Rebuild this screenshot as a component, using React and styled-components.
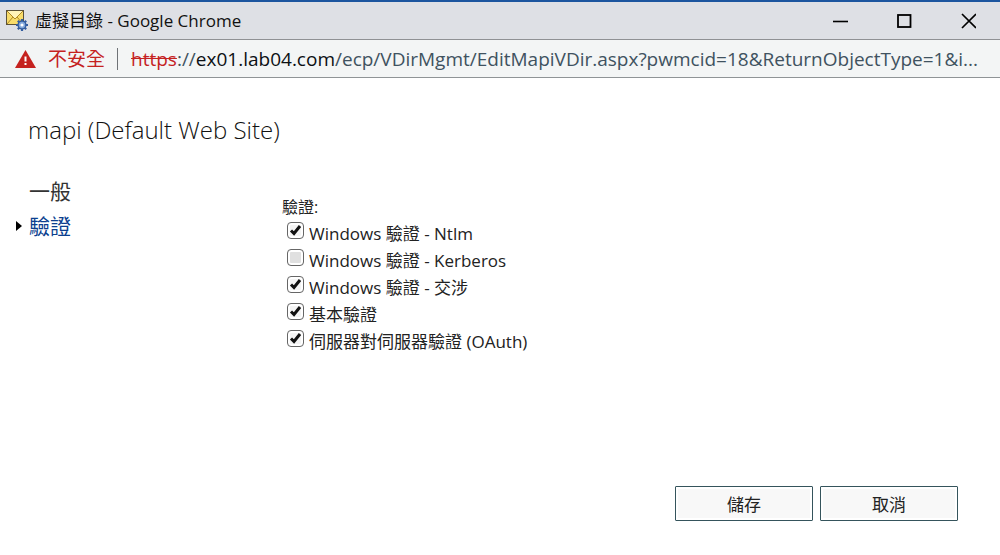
import React from "react";
import styled, { createGlobalStyle } from "styled-components";

const GlobalStyle = createGlobalStyle`
  *, *::before, *::after { box-sizing: border-box; }
  body {
    margin: 0;
    background: #fff;
    font-family: "Open Sans", "Noto Sans CJK TC", sans-serif;
    color: #333;
  }
`;

const Window = styled.div`
  min-height: 100vh;
  display: flex;
  flex-direction: column;
  background: #fff;
`;

const TitleBar = styled.header`
  display: flex;
  align-items: center;
  height: 40px;
  padding-left: 5px;
  background: #dee0e5;
  border-top: 2px solid #1c559f;
  border-bottom: 1px solid #8f9194;
`;

const WindowTitle = styled.h1`
  flex: 1;
  margin: 0 0 0 6px;
  font-size: 17px;
  line-height: 24px;
  font-weight: 400;
  color: #111;
`;

const WindowButton = styled.button`
  display: flex;
  align-items: center;
  justify-content: center;
  width: 64px;
  height: 36px;
  padding: 0;
  border: 0;
  background: transparent;
  color: #000;
`;

const AddressBar = styled.div`
  display: flex;
  align-items: center;
  height: 38px;
  padding: 0 16px 0 15px;
  background: #f3f5f5;
  border-bottom: 1px solid #8f9496;
  font-size: 19px;
  line-height: 26px;
  white-space: nowrap;
`;

const SecurityLabel = styled.span`
  margin-left: 12px;
  padding-right: 12px;
  color: #c5221f;
`;

const Divider = styled.span`
  width: 1px;
  height: 22px;
  margin-right: 13px;
  background: #6f7377;
`;

const Url = styled.span`
  flex: 1;
  min-width: 0;
  overflow: hidden;
  color: #40525f;
`;

const Scheme = styled.s`
  color: #c5221f;
`;

const Host = styled.span`
  color: #0c1014;
`;

const Page = styled.main`
  flex: 1;
  display: flex;
  flex-direction: column;
  padding: 36px 42px 34px 16px;
`;

const PageTitle = styled.h2`
  margin: 0 0 27px 12px;
  font-size: 24px;
  line-height: 32px;
  font-weight: 300;
  color: #111;
`;

const Columns = styled.div`
  flex: 1;
  display: flex;
`;

const Nav = styled.nav`
  width: 266px;
  flex: none;
`;

const NavLink = styled.a`
  display: flex;
  align-items: center;
  height: 35px;
  font-size: 21px;
  line-height: 28px;
  text-decoration: none;
  color: ${({ $active }) => ($active ? "#0b3f8f" : "#333")};
`;

const Marker = styled.span`
  display: flex;
  width: 13px;
  color: #000;
`;

const Options = styled.fieldset`
  margin: 0;
  padding: 22px 0 0;
  border: 0;
`;

const Legend = styled.legend`
  float: left;
  padding: 0;
  font-size: 16px;
  line-height: 24px;
  color: #222;
`;

const OptionList = styled.div`
  clear: both;
  padding: 2px 0 0 5px;
`;

const Option = styled.label`
  display: flex;
  align-items: flex-start;
  height: 27px;
  font-size: 17px;
  line-height: 25px;
  color: #222;
`;

const CheckboxFrame = styled.span`
  display: grid;
  width: 17px;
  height: 17px;
  margin: 1px 5px 0 0;
`;

const Checkbox = styled.input`
  appearance: none;
  grid-area: 1 / 1;
  width: 17px;
  height: 17px;
  margin: 0;
  border: 1px solid #666;
  border-radius: 4px;
  background: #e0e0e0;
  box-shadow: inset 0 0 0 2px #fff;
  &:checked { background: #f4f4f4; }
  & + svg { visibility: hidden; }
  &:checked + svg { visibility: visible; }
`;

const Tick = styled.svg`
  grid-area: 1 / 1;
  pointer-events: none;
`;

const Actions = styled.footer`
  display: flex;
  justify-content: flex-end;
  gap: 7px;
`;

const ActionButton = styled.button`
  width: 138px;
  height: 35px;
  padding: 2px 0 0;
  border: 1px solid #35545c;
  border-radius: 1px;
  background: #f8f8f8;
  box-shadow: inset 0 0 0 2px #fff;
  font-family: inherit;
  font-size: 17px;
  line-height: 24px;
  color: #222;
`;

function MailGearIcon() {
  return (
    <svg width="24" height="24" viewBox="0 0 24 24" aria-hidden="true">
      <rect x="1.5" y="1.5" width="17" height="14" fill="#f8dc6a" stroke="#5b5138" />
      <path d="M2 2h16l-8 8z" fill="#fff3b8" />
      <path d="M2 2l8 8 8-8M2 15l6-7M18 15l-6-7" fill="none" stroke="#b08a25" />
      <path
        d="M17 10v12M11 16h12M12.800 11.800l8.400 8.400M21.200 11.800l-8.400 8.400"
        stroke="#335d9f"
        strokeWidth="2.200"
      />
      <circle cx="17" cy="16" r="4.600" fill="#335d9f" />
      <circle cx="17" cy="16" r="3.200" fill="#83a8dc" />
      <circle cx="17" cy="16" r="1.600" fill="#fff" />
    </svg>
  );
}

function WarningIcon() {
  return (
    <svg width="21" height="18" viewBox="0 0 21 18" aria-hidden="true">
      <path d="M10.500 0L21 18H0z" fill="#c5221f" />
      <path d="M9.500 6.500h2v5h-2zM9.500 13h2v2h-2z" fill="#fff" />
    </svg>
  );
}

const navItems = [
  { label: "一般", active: false },
  { label: "驗證", active: true },
];

const options = [
  { id: "ntlm", label: "Windows 驗證 - Ntlm", checked: true },
  { id: "kerberos", label: "Windows 驗證 - Kerberos", checked: false },
  { id: "negotiate", label: "Windows 驗證 - 交涉", checked: true },
  { id: "basic", label: "基本驗證", checked: true },
  { id: "oauth", label: "伺服器對伺服器驗證 (OAuth)", checked: true },
];

export default function App() {
  return (
    <Window>
      <GlobalStyle />
      <TitleBar>
        <MailGearIcon />
        <WindowTitle>虛擬目錄 - Google Chrome</WindowTitle>
        <WindowButton type="button" aria-label="最小化">
          <svg width="16" height="16" viewBox="0 0 16 16">
            <path d="M1 8.500h15" stroke="currentColor" strokeWidth="1.600" />
          </svg>
        </WindowButton>
        <WindowButton type="button" aria-label="最大化">
          <svg width="16" height="16" viewBox="0 0 16 16">
            <rect x="2" y="2" width="12.500" height="12" fill="none" stroke="currentColor" strokeWidth="1.800" />
          </svg>
        </WindowButton>
        <WindowButton type="button" aria-label="關閉">
          <svg width="16" height="16" viewBox="0 0 16 16">
            <path d="M2 1l14 14M16 1L2 15" stroke="currentColor" strokeWidth="1.700" />
          </svg>
        </WindowButton>
      </TitleBar>
      <AddressBar>
        <WarningIcon />
        <SecurityLabel>不安全</SecurityLabel>
        <Divider />
        <Url>
          <Scheme>https</Scheme>://<Host>ex01.lab04.com</Host>
          /ecp/VDirMgmt/EditMapiVDir.aspx?pwmcid=18&amp;ReturnObjectType=1&amp;i...
        </Url>
      </AddressBar>
      <Page>
        <PageTitle>mapi (Default Web Site)</PageTitle>
        <Columns>
          <Nav>
            {navItems.map((item) => (
              <NavLink key={item.label} href="#" $active={item.active}>
                <Marker>
                  {item.active && (
                    <svg width="6" height="12" viewBox="0 0 6 12" aria-hidden="true">
                      <path d="M0 1l6 5-6 5z" fill="currentColor" />
                    </svg>
                  )}
                </Marker>
                {item.label}
              </NavLink>
            ))}
          </Nav>
          <Options>
            <Legend>驗證:</Legend>
            <OptionList>
              {options.map((option) => (
                <Option key={option.id} htmlFor={option.id}>
                  <CheckboxFrame>
                    <Checkbox id={option.id} type="checkbox" defaultChecked={option.checked} />
                    <Tick width="17" height="17" viewBox="0 0 17 17" aria-hidden="true">
                      <path d="M4 8.500l3 3 6-7.500" fill="none" stroke="#111" strokeWidth="3" />
                    </Tick>
                  </CheckboxFrame>
                  {option.label}
                </Option>
              ))}
            </OptionList>
          </Options>
        </Columns>
        <Actions>
          <ActionButton type="button">儲存</ActionButton>
          <ActionButton type="button">取消</ActionButton>
        </Actions>
      </Page>
    </Window>
  );
}
